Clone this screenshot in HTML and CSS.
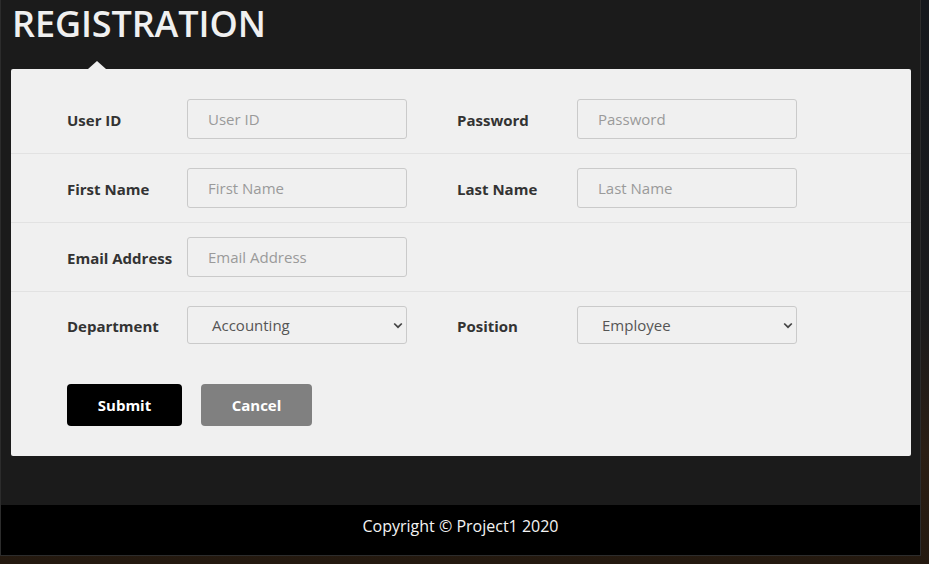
FILE: index.html
```html
<!DOCTYPE html>
<html>
<head>
<meta charset="utf-8">
<link rel="stylesheet" href="styles.css">
</head>
<body>
<div class="page">
  <main class="main">
    <h1 class="title">REGISTRATION</h1>
    <form class="card">
      <div class="row">
        <div class="field">
          <label class="label">User ID</label>
          <input class="input" type="text" placeholder="User ID">
        </div>
        <div class="field">
          <label class="label">Password</label>
          <input class="input" type="password" placeholder="Password">
        </div>
      </div>
      <div class="row">
        <div class="field">
          <label class="label">First Name</label>
          <input class="input" type="text" placeholder="First Name">
        </div>
        <div class="field">
          <label class="label">Last Name</label>
          <input class="input" type="text" placeholder="Last Name">
        </div>
      </div>
      <div class="row">
        <div class="field">
          <label class="label">Email Address</label>
          <input class="input" type="text" placeholder="Email Address">
        </div>
      </div>
      <div class="row last">
        <div class="field">
          <label class="label">Department</label>
          <div class="select">
            <span>Accounting</span>
            <svg class="chev" width="10" height="7" viewBox="0 0 10 7"><path d="M1.2 1.5 L5 5.2 L8.8 1.5" fill="none" stroke="#444" stroke-width="1.7"/></svg>
          </div>
        </div>
        <div class="field">
          <label class="label">Position</label>
          <div class="select">
            <span>Employee</span>
            <svg class="chev" width="10" height="7" viewBox="0 0 10 7"><path d="M1.2 1.5 L5 5.2 L8.8 1.5" fill="none" stroke="#444" stroke-width="1.7"/></svg>
          </div>
        </div>
      </div>
      <div class="actions">
        <button type="button" class="btn submit">Submit</button>
        <button type="button" class="btn cancel">Cancel</button>
      </div>
    </form>
  </main>
  <footer class="footer">Copyright © Project1 2020</footer>
</div>
</body>
</html>
```
FILE: styles.css
```css
html, body {
  margin: 0;
  padding: 0;
}
body {
  width: 929px;
  height: 564px;
  overflow: hidden;
  font-family: "Open Sans", "Noto Sans", sans-serif;
  background: linear-gradient(180deg, #15181d 0%, #1a1a1c 55%, #2b1e14 80%, #24190f 100%);
}
.page {
  width: 919px;
  border: 1px solid #2c2c2c;
  border-top: none;
  background: #1b1b1b;
  box-sizing: content-box;
}
.main {
  padding: 0 9px 49px 10px;
}
.title {
  margin: 0 0 21px 1px;
  font-size: 36px;
  line-height: 48px;
  font-weight: 600;
  color: #f0f0f0;
  letter-spacing: -0.1px;
}
.card {
  position: relative;
  width: 900px;
  background: #f0f0f0;
  border-radius: 2px;
  padding-top: 16px;
  box-sizing: border-box;
}
.card::before {
  content: "";
  position: absolute;
  left: 77px;
  top: -8px;
  border-left: 9px solid transparent;
  border-right: 9px solid transparent;
  border-bottom: 8px solid #f0f0f0;
}
.row {
  display: flex;
  gap: 50px;
  padding: 14px 0 14px 56px;
  border-bottom: 1px solid #e2e2e2;
}
.row.last {
  border-bottom: none;
  padding-bottom: 0;
}
.field {
  display: flex;
  align-items: center;
  width: 340px;
}
.label {
  width: 120px;
  font-size: 15px;
  font-weight: 700;
  color: #333;
  padding-top: 2px;
}
.input {
  width: 220px;
  height: 40px;
  box-sizing: border-box;
  border: 1px solid #cacaca;
  border-radius: 3px;
  background: #f0f0f0;
  padding: 0 0 0 20px;
  font-family: "Open Sans", sans-serif;
  font-size: 15px;
  color: #555;
  outline: none;
}
.input::placeholder {
  color: #9a9a9a;
}
.select {
  width: 220px;
  height: 38px;
  box-sizing: border-box;
  border: 1px solid #cacaca;
  border-radius: 3px;
  background: #f0f0f0;
  display: flex;
  align-items: center;
  justify-content: space-between;
  padding: 0 3px 0 24px;
  font-size: 15px;
  color: #555;
}
.chev {
  display: block;
  margin-top: 1px;
}
.actions {
  display: flex;
  gap: 19px;
  padding: 40px 0 30px 56px;
}
.btn {
  height: 42px;
  border: none;
  border-radius: 4px;
  font-family: "Open Sans", sans-serif;
  font-size: 15px;
  font-weight: 700;
  color: #fff;
  cursor: pointer;
}
.submit {
  width: 115px;
  background: #000;
}
.cancel {
  width: 111px;
  background: #808080;
}
.footer {
  height: 50px;
  box-sizing: border-box;
  padding-top: 9px;
  line-height: 24px;
  background: #000;
  color: #f4f4f4;
  font-size: 16px;
  text-align: center;
}
```
